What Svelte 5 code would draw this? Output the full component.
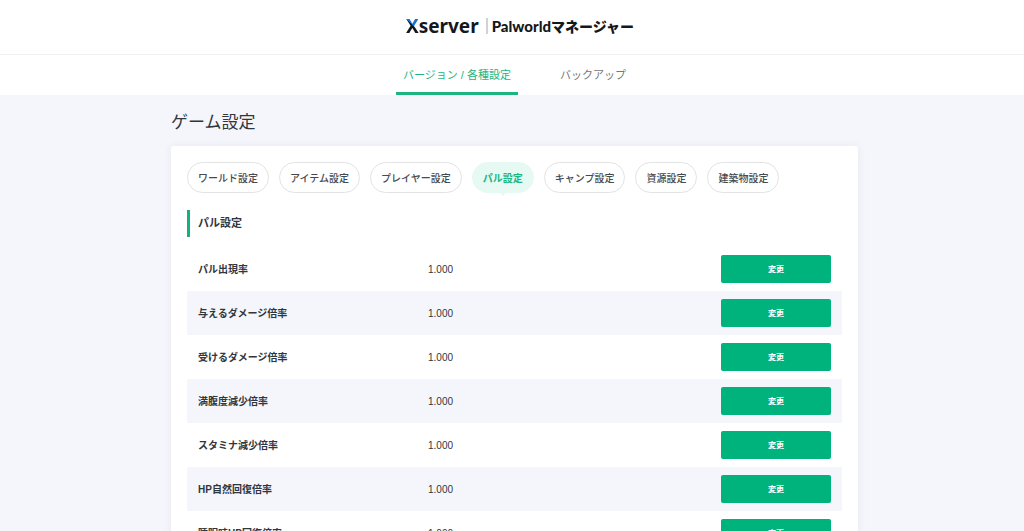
<script>
  const navItems = [
    { label: 'バージョン / 各種設定', active: true },
    { label: 'バックアップ', active: false }
  ];

  const tabs = [
    'ワールド設定',
    'アイテム設定',
    'プレイヤー設定',
    'パル設定',
    'キャンプ設定',
    '資源設定',
    '建築物設定'
  ];

  let currentTab = $state('パル設定');

  const settings = [
    { name: 'パル出現率', value: '1.000' },
    { name: '与えるダメージ倍率', value: '1.000' },
    { name: '受けるダメージ倍率', value: '1.000' },
    { name: '満腹度減少倍率', value: '1.000' },
    { name: 'スタミナ減少倍率', value: '1.000' },
    { name: 'HP自然回復倍率', value: '1.000' },
    { name: '睡眠時HP回復倍率', value: '1.000' }
  ];
</script>

<div class="page">
  <header>
    <a class="logo" href="/">
      <span class="brand"><span class="brand-x">X</span>server</span>
      <span class="product">Palworld<span class="product-kana">マネージャー</span></span>
    </a>
  </header>

  <nav>
    {#each navItems as item}
      <a href="/" class:active={item.active}>{item.label}</a>
    {/each}
  </nav>

  <main>
    <h1>ゲーム設定</h1>

    <section class="card">
      <div class="tabs">
        {#each tabs as tab}
          <button class="tab" class:current={tab === currentTab} onclick={() => (currentTab = tab)}>{tab}</button>
        {/each}
      </div>

      <h2>{currentTab}</h2>

      <table>
        <tbody>
          {#each settings as setting}
            <tr>
              <th scope="row">{setting.name}</th>
              <td>{setting.value}</td>
              <td class="action"><button class="change">変更</button></td>
            </tr>
          {/each}
        </tbody>
      </table>
    </section>
  </main>
</div>

<style>
  :global(body) {
    background: #f5f6fb;
  }
  .page {
    font-family: "Liberation Sans", "Noto Sans CJK JP", sans-serif;
    font-size: 10px;
    color: #30363d;
  }
  button {
    font-family: inherit;
    cursor: pointer;
  }
  header {
    display: flex;
    justify-content: center;
    align-items: center;
    box-sizing: border-box;
    height: 55px;
    padding: 0 0 2px 16px;
    background: #fff;
    border-bottom: 1px solid #f0f0ee;
  }
  .logo {
    display: flex;
    align-items: center;
    color: #14171c;
    font-weight: 700;
    text-decoration: none;
  }
  .brand {
    padding-right: 7px;
    border-right: 2px solid #d2d2d2;
    font-family: "Noto Sans", sans-serif;
    font-size: 19px;
    line-height: 16px;
  }
  .brand-x {
    background: linear-gradient(45deg, #14171c 52%, #1673d1 52%);
    background-clip: text;
    color: transparent;
  }
  .product {
    padding-left: 4px;
    font-family: Lato, "Noto Sans CJK JP", sans-serif;
    font-size: 15px;
    font-weight: 900;
    line-height: 16px;
  }
  .product-kana {
    font-size: 14px;
  }
  nav {
    display: flex;
    justify-content: center;
    gap: 35px;
    padding-left: 5px;
    background: #fff;
  }
  nav a {
    box-sizing: border-box;
    height: 40px;
    padding: 0 7px;
    border-bottom: 3px solid transparent;
    color: #777;
    font-size: 11px;
    line-height: 40px;
    text-decoration: none;
  }
  nav a.active {
    border-bottom-color: #1cb57f;
    color: #1cb57f;
  }
  main {
    max-width: 687px;
    margin: 0 auto;
    padding-left: 5px;
  }
  h1 {
    margin: 0;
    padding: 16px 0 11px;
    font-size: 17px;
    font-weight: 400;
    line-height: 24px;
  }
  .card {
    padding: 16px;
    background: #fff;
    border-radius: 3px;
    box-shadow: 0 0 8px rgba(60, 70, 110, 0.07);
  }
  .tabs {
    display: flex;
    flex-wrap: wrap;
    gap: 10px;
  }
  .tab {
    position: relative;
    height: 31px;
    padding: 0 10px 1px;
    border: 1px solid #e3e3e3;
    border-radius: 16px;
    background: #fff;
    color: #454a50;
    font-size: 10px;
    font-weight: 500;
  }
  .tab.current {
    border-color: #e6f9f3;
    background: #e6f9f3;
    color: #1cb57f;
    font-weight: 700;
  }
  .tab.current::after {
    content: "";
    position: absolute;
    top: 100%;
    left: 50%;
    margin-left: -4px;
    border: 4px solid transparent;
    border-top-color: #e6f9f3;
    border-bottom: 0;
  }
  h2 {
    margin: 17px 0 10px;
    padding-left: 8px;
    border-left: 3px solid #12b27c;
    font-size: 11px;
    font-weight: 700;
    line-height: 27px;
  }
  table {
    width: 100%;
    border-collapse: collapse;
  }
  tr:nth-child(even) {
    background: #f5f6fb;
  }
  th,
  td {
    box-sizing: border-box;
    height: 44px;
    padding: 0 11px;
    text-align: left;
  }
  th {
    width: 230px;
    padding-bottom: 2px;
    font-weight: 700;
  }
  .action {
    text-align: right;
  }
  .change {
    width: 110px;
    height: 28px;
    padding: 0 0 2px;
    border: 0;
    border-radius: 2px;
    background: #00b27b;
    color: #fff;
    font-size: 8px;
    font-weight: 700;
    vertical-align: middle;
  }
</style>
